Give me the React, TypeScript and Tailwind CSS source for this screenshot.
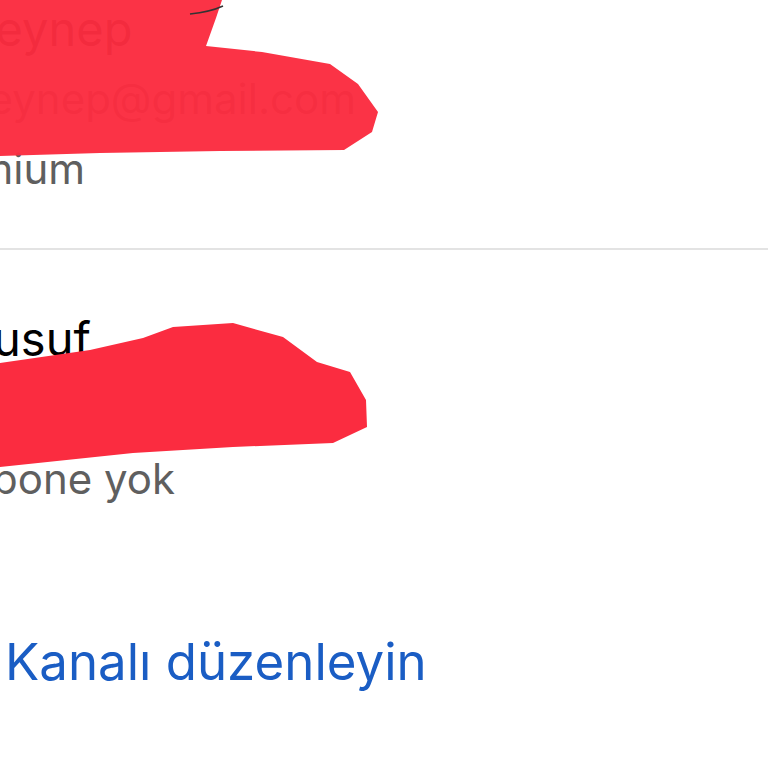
import React from "react";

function Scribbles() {
  return (
    <svg className="absolute left-0 top-0" width="768" height="768" viewBox="0 0 768 768">
      <path
        d="M0 0 L222 0 L216 18 L206 46 L262 52 L330 64 L358 84 L378 112 L372 132 L344 150 L220 151 L100 153 L0 156 Z"
        fill="#fb2c40"
        opacity="0.97"
      />
      <path d="M190 14 Q210 12 223 6" stroke="#333" strokeWidth="1.5" fill="none" />
      <path
        d="M0 363 L90 350 L143 338 L173 327 L233 323 L283 337 L317 362 L350 372 L366 400 L367 427 L333 443 L233 447 L133 453 L0 467 Z"
        fill="#fb2c40"
      />
    </svg>
  );
}

export default function App() {
  const font = { fontFamily: "Inter, 'Noto Sans', sans-serif" };
  return (
    <div className="relative w-[768px] h-[768px] overflow-hidden bg-white" style={font}>
      <div className="-mt-[6px]">
        {/* first account */}
        <div className="pb-[44px] -ml-[34px]">
          <div className="text-[47px] leading-[70px] text-black">Zeynep</div>
          <div className="text-[42px] leading-[70px] text-[#606060] whitespace-nowrap">zeynep@gmail.com</div>
          <div className="text-[42px] leading-[70px] text-[#5f5f5f] -ml-[56px]">Premium</div>
        </div>
        <div className="h-[2px] bg-[#e3e3e3]" />

        {/* second account */}
        <div className="pt-[54px] -ml-[37px]">
          <div className="text-[47px] leading-[70px] text-black">Yusuf</div>
          <div className="text-[42px] leading-[70px] text-[#606060] whitespace-nowrap">yusuf@gmail.com</div>
          <div className="text-[42px] leading-[70px] text-[#5f5f5f]">Abone yok</div>
        </div>

        <div className="mt-[113px] pl-[5px] text-[51px] leading-[70px] text-[#1a5dc4] whitespace-nowrap">
          Kanalı düzenleyin
        </div>
      </div>
      <Scribbles />
    </div>
  );
}
